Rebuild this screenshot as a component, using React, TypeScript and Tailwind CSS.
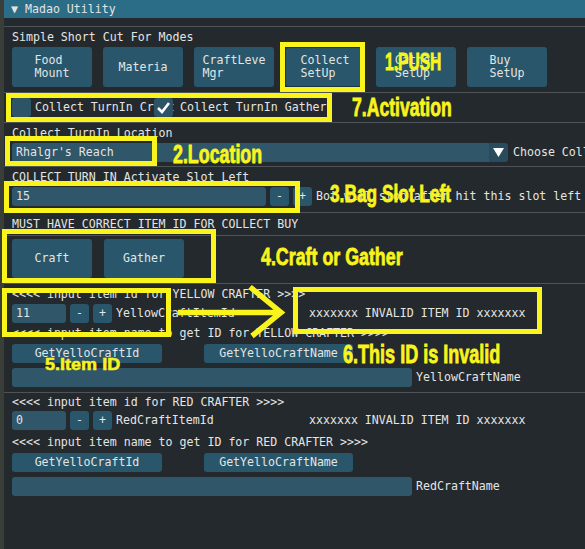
import React from 'react'

const txt = "[font-family:'DejaVu_Sans_Mono',monospace] text-[11.6px] leading-[13px] text-[#e3e5e5]"
const note = "absolute [font-family:'Liberation_Sans',Arial,sans-serif] font-bold leading-none text-[#f8f41c] [-webkit-text-stroke:0.7px_#f8f41c] origin-top-left whitespace-nowrap"

function Sep({ className = '' }: { className?: string }) {
  return <div className={`h-px bg-[#4d5356] ${className}`} />
}

function Line({ children, className = '' }: { children: React.ReactNode; className?: string }) {
  return <div className={`h-[13px] pl-[8px] ${className}`}>{children}</div>
}

function Btn({ children, className = '' }: { children: React.ReactNode; className?: string }) {
  return (
    <div className={`flex items-center justify-center rounded-[3px] bg-[#29566a] ${className}`}>
      <span className="inline-block text-left">{children}</span>
    </div>
  )
}

function Frame({ children, className = '' }: { children?: React.ReactNode; className?: string }) {
  return <div className={`h-full flex items-center pl-[4px] rounded-[3px] bg-[#2f5669] ${className}`}>{children}</div>
}

function Stepper({ value, width, label, extra }: { value: string; width: string; label: string; extra?: string }) {
  return (
    <div className="h-[19px] flex gap-[4px] pl-[8px]">
      <Frame className={width}>{value}</Frame>
      <Btn className="w-[19px] h-full">-</Btn>
      <Btn className="w-[19px] h-full">+</Btn>
      <div className={`flex items-center ${extra ? 'w-[189px]' : ''}`}>{label}</div>
      {extra && <div className="flex items-center">{extra}</div>}
    </div>
  )
}

function NameLookup({ label }: { label: string }) {
  return (
    <>
      <div className="h-[19px] flex gap-[42px] pl-[8px] mt-[4px]">
        <Btn className="w-[150px] h-full">GetYelloCraftId</Btn>
        <Btn className="w-[149px] h-full">GetYelloCraftName</Btn>
      </div>
      <div className="h-[19px] flex gap-[4px] pl-[8px] mt-[5px]">
        <Frame className="w-[400px]" />
        <div className="flex items-center">{label}</div>
      </div>
    </>
  )
}

export default function App() {
  return (
    <div className={`relative w-[585px] h-[549px] overflow-hidden flex bg-[#353a35] ${txt}`}>
      <div className="w-[4px] shrink-0 bg-[#3a3e39]" />
      <div className="flex-1 flex flex-col bg-[#23292c] whitespace-nowrap">
        {/* title bar */}
        <div className="h-[18px] bg-[#2b6c87] pl-[7px] flex items-center">▼ Madao Utility</div>
        <Sep className="mt-[8px]" />
        <Line className="mt-[4px]">Simple Short Cut For Modes</Line>

        <div className="mt-[3px] h-[40px] flex gap-[11px] pl-[8px]">
          <Btn className="w-[80px]">Food<br />Mount</Btn>
          <Btn className="w-[80px]">Materia</Btn>
          <Btn className="w-[80px]">CraftLeve<br />Mgr</Btn>
          <Btn className="w-[80px] bg-[#1f4859] border border-[#163644]">Collect<br />SetUp</Btn>
          <Btn className="w-[80px]">Gather<br />SetUp</Btn>
          <Btn className="w-[80px]">Buy<br />SetUp</Btn>
        </div>
        <Sep className="mt-[5px]" />

        {/* turn-in toggles */}
        <div className="mt-[5px] h-[19px] flex pl-[8px]">
          <div className="w-[19px] h-full rounded-[3px] bg-[#2d5366]" />
          <div className="w-[119px] ml-[4px] flex items-center">Collect TurnIn Craft</div>
          <div className="relative w-[19px] h-full rounded-[3px] bg-[#2d5366] flex items-center justify-center">
            <svg width="15" height="13" viewBox="0 0 15 13">
              <path d="M2 7 L6 11 L13 2" fill="none" stroke="#ffffff" strokeWidth="2.6" />
            </svg>
          </div>
          <div className="ml-[7px] flex items-center">Collect TurnIn Gather</div>
        </div>
        <Sep className="mt-[5px]" />

        <Line className="mt-[4px]">Collect TurnIn Location</Line>
        <div className="mt-[3px] h-[19px] flex pl-[8px]">
          <div className="w-[477px] h-full flex items-center pl-[4px] rounded-l-[3px] bg-[#2f5669]">Rhalgr's Reach</div>
          <div className="w-[19px] h-full flex items-center justify-center rounded-r-[3px] bg-[#284c5d]">
            <svg width="11" height="9" viewBox="0 0 11 9">
              <path d="M0 0 H11 L5.5 9 Z" fill="#ffffff" />
            </svg>
          </div>
          <div className="ml-[5px] flex items-center">Choose Collect TurnIn Location</div>
        </div>
        <Sep className="mt-[4px]" />

        <Line className="mt-[4px]">COLLECT TURN IN Activate Slot Left</Line>
        <div className="mt-[3px]">
          <Stepper value="15" width="w-[254px]" label="Bot will stop after hit this slot left" />
        </div>
        <Sep className="mt-[6px]" />
        <Line className="mt-[5px]">MUST HAVE CORRECT ITEM ID FOR COLLECT BUY</Line>
        <Sep className="mt-[4px]" />

        <div className="mt-[3px] h-[39px] flex gap-[12px] pl-[8px]">
          <Btn className="w-[80px]">Craft</Btn>
          <Btn className="w-[80px]">Gather</Btn>
        </div>
        <Sep className="mt-[5px]" />

        {/* yellow crafter */}
        <Line className="mt-[4px]">{'<<<< input item id  for YELLOW CRAFTER  >>>>'}</Line>
        <div className="mt-[3px]">
          <Stepper value="11" width="w-[54px]" label="YellowCraftItemId" extra="xxxxxxx INVALID ITEM ID xxxxxxx" />
        </div>
        <Line className="mt-[4px]">{'<<<< input item name to get ID for YELLOW CRAFTER >>>>'}</Line>
        <NameLookup label="YellowCraftName" />
        <Sep className="mt-[5px]" />

        {/* red crafter */}
        <Line className="mt-[3px]">{'<<<< input item id  for RED CRAFTER  >>>>'}</Line>
        <div className="mt-[2px]">
          <Stepper value="0" width="w-[54px]" label="RedCraftItemId" extra="xxxxxxx INVALID ITEM ID xxxxxxx" />
        </div>
        <Line className="mt-[6px]">{'<<<< input item name to get ID for RED CRAFTER >>>>'}</Line>
        <NameLookup label="RedCraftName" />
      </div>

      {/* callouts */}
      <div className="absolute left-[280px] top-[42px] w-[85px] h-[50px] border-[5px] border-[#f8f41c]" />
      <div className="absolute left-[6px] top-[93px] w-[326px] h-[29px] border-[5px] border-[#f8f41c]" />
      <div className="absolute left-[5px] top-[136px] w-[152px] h-[30px] border-[5px] border-[#f8f41c]" />
      <div className="absolute left-[4px] top-[181px] w-[296px] h-[32px] border-[5px] border-[#f8f41c]" />
      <div className="absolute left-[2px] top-[229px] w-[214px] h-[54px] border-[5px] border-[#f8f41c]" />
      <div className="absolute left-[2px] top-[288px] w-[169px] h-[49px] border-[5px] border-[#f8f41c]" />
      <div className="absolute left-[293px] top-[287px] w-[249px] h-[47px] border-[5px] border-[#f8f41c]" />
      <svg className="absolute left-0 top-0" width="585" height="549">
        <path d="M178 312.5 H278 M250 287 L281 312.5 L252 336" fill="none" stroke="#f8f41c" strokeWidth="5.5" />
      </svg>

      <div className={`${note} left-[385px] top-[50px] text-[20px] scale-x-[0.78] scale-y-[1.19]`}>1.PUSH</div>
      <div className={`${note} left-[352px] top-[95px] text-[22px] scale-x-[0.8] scale-y-[1.14]`}>7.Activation</div>
      <div className={`${note} left-[173px] top-[142px] text-[22px] scale-x-[0.81] scale-y-[1.14]`}>2.Location</div>
      <div className={`${note} left-[330px] top-[182px] text-[22px] scale-x-[0.786] scale-y-[1.1]`}>3.Bag Slot Left</div>
      <div className={`${note} left-[261px] top-[245px] text-[22px] scale-x-[0.81] scale-y-[1.11]`}>4.Craft or Gather</div>
      <div className={`${note} left-[45px] top-[356px] text-[22px] scale-x-[0.82] scale-y-[0.79]`}>5.Item ID</div>
      <div className={`${note} left-[343px] top-[342px] text-[22px] scale-x-[0.82] scale-y-[1.14]`}>6.This ID is Invalid</div>
    </div>
  )
}
